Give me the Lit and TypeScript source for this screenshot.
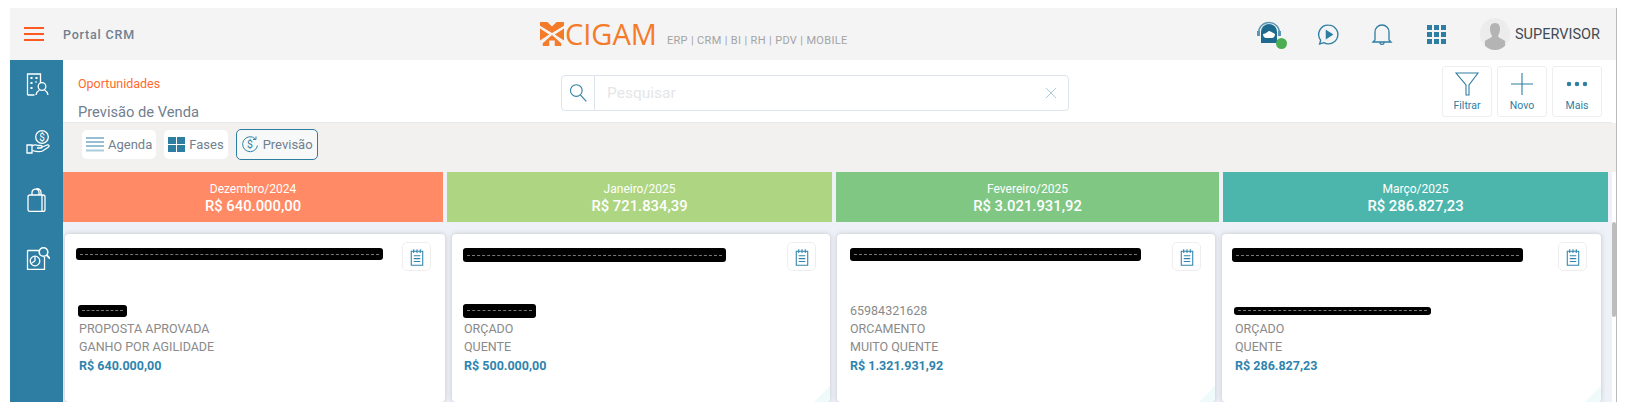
import { LitElement, html, css, svg } from 'lit';
import { customElement } from 'lit/decorators.js';

interface Deal {
  nameWidth: number;
  nameHeight: number;
  nameShift: number;
  contact?: string;
  contactWidth?: number;
  contactHeight?: number;
  contactShift?: number;
  status: string;
  temp: string;
  value: string;
}

interface Month {
  label: string;
  total: string;
  color: string;
  deal: Deal;
}

const MONTHS: Month[] = [
  {
    label: 'Dezembro/2024', total: 'R$ 640.000,00', color: '#ff8a65',
    deal: {
      nameWidth: 307, nameHeight: 12, nameShift: -3, contactWidth: 49, contactHeight: 12, contactShift: -1,
      status: 'PROPOSTA APROVADA', temp: 'GANHO POR AGILIDADE', value: 'R$ 640.000,00'
    }
  },
  {
    label: 'Janeiro/2025', total: 'R$ 721.834,39', color: '#aed581',
    deal: {
      nameWidth: 263, nameHeight: 14, nameShift: -1, contactWidth: 73, contactHeight: 14, contactShift: -1,
      status: 'ORÇADO', temp: 'QUENTE', value: 'R$ 500.000,00'
    }
  },
  {
    label: 'Fevereiro/2025', total: 'R$ 3.021.931,92', color: '#81c784',
    deal: {
      nameWidth: 291, nameHeight: 13, nameShift: 0, contact: '65984321628',
      status: 'ORCAMENTO', temp: 'MUITO QUENTE', value: 'R$ 1.321.931,92'
    }
  },
  {
    label: 'Março/2025', total: 'R$ 286.827,23', color: '#4db6ac',
    deal: {
      nameWidth: 291, nameHeight: 14, nameShift: -3, contactWidth: 197, contactHeight: 8, contactShift: -1,
      status: 'ORÇADO', temp: 'QUENTE', value: 'R$ 286.827,23'
    }
  }
];

const icon = (w: number, h: number, body: unknown, vb = '0 0 24 24') => html`
  <svg width=${w} height=${h} viewBox=${vb} fill="none" stroke="currentColor" stroke-width="1.3">${body}</svg>`;

const SIDE_ICONS = [
  svg`<path d="M1.500 23V2h13v9M1.500 23h7"/><path d="M4.500 6h2M9.500 6h2M4.500 11h2M4.500 16h2M9.500 10h1" stroke-width="2"/><circle cx="16" cy="14.500" r="3.800"/><path d="M10 23c.5-3 2.500-4.500 3.500-5M22 23c-.5-3-2.500-4.500-3.500-5"/>`,
  svg`<circle cx="16" cy="7" r="6.300"/><path d="M1 15h5v8H1zM6 16c2-1.500 4-1.500 6-.5h3c1.500 0 1.500 2.500 0 2.500h-4M15 17.500l6-2.500c2-.5 2.500 1 1.500 2l-6 4c-3 1.500-7 .5-10.500-.5"/><text x="16" y="10.500" font-size="10" fill="currentColor" stroke="none" text-anchor="middle" font-family="Roboto, sans-serif">$</text>`,
  svg`<rect x="2" y="7" width="17" height="16.500" rx="2"/><path d="M16 7v16.500"/><path d="M6 7V4.500c0-4.500 7-4.500 7 0V7M10 1c3-1 5 1 5 3.500V7"/>`,
  svg`<path d="M1.500 4.500h15M1.500 4.500V23.500h17V11"/><circle cx="9" cy="15" r="4.800"/><path d="M9 15v-4.800M9 15l-4 2.500"/><circle cx="17.500" cy="6" r="4.300" fill="#2e7ea3" stroke-width="1.600"/><path d="M20.500 9 24 12.500" stroke-width="1.800"/>`
];

@customElement('app-root')
export class AppRoot extends LitElement {
  static styles = css`
    :host {
      display: block;
      font-family: Roboto, 'Liberation Sans', sans-serif;
      padding: 8px 11px 14px 10px;
      background: #fff;
      overflow: hidden;
    }

    .frame {
      border-right: 1px solid #bbb;
    }

    .top {
      height: 52px;
      background: #f4f4f4;
      display: grid;
      grid-template-columns: 530px 660px 1fr;
      align-items: center;
    }
    .brand-left {
      display: flex;
      align-items: center;
      padding-left: 14px;
      gap: 19px;
      color: #71808f;
      font-size: 12.500px;
      font-weight: 500;
      letter-spacing: 0.8px;
    }
    .burger {
      width: 20px;
      display: flex;
      flex-direction: column;
      gap: 4px;
    }
    .burger i {
      height: 2px;
      background: #ff5a1f;
    }
    .logo {
      display: flex;
      align-items: center;
      color: #f47b2a;
    }
    .logo-word {
      font-family: 'Open Sans', sans-serif;
      font-size: 29px;
      font-weight: 500;
      line-height: 30px;
      margin-left: 1px;
    }
    .logo-tag {
      font-size: 11px;
      color: #a3a3a3;
      margin: 12px 0 0 10px;
      letter-spacing: 0.35px;
    }
    .top-actions {
      display: flex;
      align-items: center;
      color: #2e7ea3;
      padding-left: 56px;
    }
    .agent {
      position: relative;
      display: flex;
      width: 26px;
      height: 26px;
      margin-top: -2px;
    }
    .dot {
      position: absolute;
      width: 11px;
      height: 11px;
      border-radius: 50%;
      background: #4cae50;
      right: -5px;
      bottom: -3px;
    }
    .play { margin-left: 34px; display: flex; }
    .bell { margin-left: 29px; display: flex; }
    .apps {
      margin-left: 33px;
      display: grid;
      grid-template-columns: repeat(3, 5px);
      grid-auto-rows: 5px;
      gap: 2px;
    }
    .apps i { background: #2e7ea3; }
    .user {
      display: flex;
      align-items: center;
      margin-left: 34px;
      gap: 5px;
      color: #3f4a52;
      font-size: 14.500px;
    }
    .avatar {
      width: 30px;
      height: 32px;
      border-radius: 50%;
      overflow: hidden;
      background: #ececec;
      display: flex;
    }

    .body {
      display: grid;
      grid-template-columns: 53px 1fr;
      height: 342px;
    }
    .side {
      background: #2e7ea3;
      color: #fff;
      display: flex;
      flex-direction: column;
      align-items: center;
      padding: 12px 0 0 3px;
      gap: 34px;
    }
    .side svg { display: block; }

    .main {
      display: flex;
      flex-direction: column;
      position: relative;
      overflow: hidden;
      padding-right: 4px;
    }
    .head {
      height: 63px;
      flex: none;
      display: grid;
      grid-template-columns: 500px 510px 1fr;
      border-bottom: 1px solid #e9e9e9;
      box-sizing: border-box;
      padding-left: 15px;
    }
    .crumbs {
      padding-top: 17px;
    }
    .crumb {
      font-size: 12.500px;
      color: #ff6a2b;
      line-height: 14px;
    }
    .title {
      font-size: 14.700px;
      color: #71808f;
      line-height: 18px;
      margin-top: 12px;
    }
    .search {
      align-self: start;
      margin: 15px 0 0 -17px;
      height: 36px;
      width: 508px;
      box-sizing: border-box;
      border: 1px solid #dfe4ec;
      border-radius: 4px;
      display: flex;
      align-items: center;
      color: #2e7ea3;
    }
    .search-ico {
      width: 33px;
      height: 100%;
      box-sizing: border-box;
      border-right: 1px solid #dfe4ec;
      display: flex;
      align-items: center;
      justify-content: center;
    }
    .search-ph {
      flex: 1;
      padding-left: 12px;
      font-size: 15.500px;
      color: #e4e6e9;
    }
    .search-x {
      display: flex;
      margin-right: 11px;
      color: #a9cbdc;
    }
    .tools {
      display: flex;
      justify-content: flex-end;
      gap: 5px;
      padding: 6px 10px 0 0;
    }
    .tool {
      width: 50px;
      height: 51px;
      box-sizing: border-box;
      border: 1px solid #eeeeee;
      border-radius: 3px;
      display: flex;
      flex-direction: column;
      align-items: center;
      color: #2e7ea3;
      font-size: 10.500px;
    }
    .tool svg { height: 26px; margin-top: 4px; margin-bottom: 2px; stroke-width: 1.100; }

    .bar {
      height: 49px;
      flex: none;
      box-sizing: border-box;
      background: #f2f1f0;
      display: flex;
      align-items: center;
      gap: 8px;
      padding: 0 0 7px 19px;
      margin-right: -4px;
    }
    .tab {
      height: 29px;
      box-sizing: border-box;
      background: #fff;
      border-radius: 5px;
      display: flex;
      align-items: center;
      gap: 4px;
      padding: 0 4px;
      color: #71808f;
      font-size: 13px;
    }
    .tab.on {
      height: 31px;
      border: 1px solid #2e7ea3;
      background: #f7f8f8;
    }
    .tab svg { color: #2e7ea3; }

    .board {
      flex: 1;
      background: #eef1f7;
      display: flex;
      flex-direction: column;
    }
    .months, .cards {
      display: grid;
      grid-template-columns: 380px 385px 383px 385px;
      column-gap: 4px;
    }
    .month {
      height: 50px;
      box-sizing: border-box;
      padding-top: 3px;
      display: flex;
      flex-direction: column;
      align-items: center;
      justify-content: center;
      color: #fff;
    }
    .month small {
      font-size: 12px;
      line-height: 15px;
    }
    .month b {
      font-size: 14.800px;
      font-weight: 500;
      line-height: 19px;
    }

    .cards {
      padding-top: 12px;
    }
    .card {
      height: 168px;
      background: #fff;
      border-radius: 4px;
      box-shadow: 0 0 5px rgba(90, 95, 100, 0.3);
      position: relative;
      padding: 14px 13px;
      box-sizing: border-box;
      font-size: 12.500px;
      color: #8a8a8a;
      overflow: hidden;
    }
    .card.c0 { margin: 0 -2px 0 2px; padding-left: 14px; }
    .card.c1 { margin: 0 2px 0 5px; padding-left: 12px; }
    .card.c2 { margin: 0 4px 0 1px; }
    .card.c3 { margin: 0 7px 0 -1px; }
    .redact {
      background: #000;
      border-radius: 3px;
      display: flex;
      align-items: center;
      padding: 0 4px;
      box-sizing: border-box;
    }
    .redact i {
      flex: 1;
      border-top: 1px dashed #777;
    }
    .name {
      height: 12px;
    }
    .contact {
      height: 19px;
      display: flex;
      align-items: center;
      margin-top: 41px;
    }
    .line {
      line-height: 18px;
      height: 18px;
    }
    .value {
      color: #2e84ad;
      font-weight: 700;
      line-height: 18px;
      margin-top: 1px;
    }
    .note {
      position: absolute;
      right: 14px;
      top: 8px;
      width: 29px;
      height: 29px;
      box-sizing: border-box;
      border: 1px solid #eeeeee;
      border-radius: 5px;
      display: flex;
      align-items: center;
      justify-content: center;
      color: #2e84ad;
    }
    .corner {
      position: absolute;
      right: 0;
      bottom: 0;
      width: 0;
      height: 0;
      border-left: 16px solid transparent;
      border-bottom: 16px solid #effbfb;
    }
    .scroll {
      position: absolute;
      right: 0;
      top: 162px;
      width: 4px;
      height: 95px;
      background: #bdbdbd;
      border-radius: 2px;
    }
  `;

  private _card(m: Month, i: number) {
    const d = m.deal;
    return html`
      <div class="card c${i}">
        <div class="name">
          <div class="redact" style="width:${d.nameWidth}px;height:${d.nameHeight}px;margin-left:${d.nameShift}px"><i></i></div>
        </div>
        <div class="contact">
          ${d.contact ?? html`
            <div class="redact" style="width:${d.contactWidth}px;height:${d.contactHeight}px;margin-left:${d.contactShift}px"><i></i></div>
          `}
        </div>
        <div class="line">${d.status}</div>
        <div class="line">${d.temp}</div>
        <div class="value">${d.value}</div>
        <div class="note">
          ${icon(16, 18, svg`<path d="M2 4h14v17H2zM5 1.500V6M9 1.500V6M13 1.500V6M5 9.500h8M5 13h8M5 16.500h8"/>`, '0 0 18 22')}
        </div>
        ${i > 0 ? html`<div class="corner"></div>` : ''}
      </div>
    `;
  }

  render() {
    return html`
      <div class="frame">
        <div class="top">
          <div class="brand-left">
            <div class="burger"><i></i><i></i><i></i></div>
            <span>Portal CRM</span>
          </div>
          <div class="logo">
            <svg width="24" height="26" viewBox="0 0 26 26" fill="#f47b2a">
              <path d="M0 0H8L13 5L18 0H26V4L13 12L0 4Z"/>
              <path d="M0 7 10 13.500 0 20ZM26 7 16 13.500 26 20Z"/>
              <path d="M13 14 23 23V26H16V20H10V26H3V23Z"/>
            </svg>
            <span class="logo-word">CIGAM</span>
            <span class="logo-tag">ERP | CRM | BI | RH | PDV | MOBILE</span>
          </div>
          <div class="top-actions">
            <div class="agent">
              <svg width="26" height="26" viewBox="0 0 26 26">
                <path d="M2.500 13a10.500 10.500 0 0 1 21 0" fill="none" stroke="#5b97b5" stroke-width="1.500"/>
                <path d="M1 11h3v5H1zM22 11h3v5h-3z" fill="#5b97b5"/>
                <path d="M5 12a8 8 0 0 1 16 0v11H5z" fill="#1d6a8e"/>
                <path d="M7 14c3 0 5-3 6-3s4 2 6 3c0 3-2 4-3 4h-6c-1 0-3-1-3-4z" fill="#fff"/>
              </svg>
              <span class="dot"></span>
            </div>
            <span class="play">
              ${icon(25, 25, svg`<path d="M12 3a9 9 0 1 1-4.500 16.800L3.500 21l1-3.500A9 9 0 0 1 12 3z"/><path d="M10 8.500 15.500 12 10 15.500z" fill="currentColor"/>`)}
            </span>
            <span class="bell">
              ${icon(24, 26, svg`<path d="M5 18V10a7 7 0 0 1 14 0v8l2 2H3zM10 20.500c0 2.500 4 2.500 4 0"/>`)}
            </span>
            <div class="apps">${Array.from({ length: 9 }, () => html`<i></i>`)}</div>
            <div class="user">
              <div class="avatar">
                <svg width="30" height="32" viewBox="0 0 30 32">
                  <path d="M15 5c4 0 5 3 5 6 0 3-1 5-2 7 0 2 5 3 7 5v9H5v-9c2-2 7-3 7-5-1-2-2-4-2-7 0-3 1-6 5-6z" fill="#b4b4b4"/>
                </svg>
              </div>
              <span>SUPERVISOR</span>
            </div>
          </div>
        </div>
        <div class="body">
          <div class="side">
            ${SIDE_ICONS.map(b => icon(24, 24, b))}
          </div>
          <div class="main">
            <div class="head">
              <div class="crumbs">
                <div class="crumb">Oportunidades</div>
                <div class="title">Previsão de Venda</div>
              </div>
              <div class="search">
                <div class="search-ico">
                  ${icon(20, 20, svg`<circle cx="10" cy="9" r="7"/><path d="M15 14.500 22 22"/>`)}
                </div>
                <div class="search-ph">Pesquisar</div>
                <span class="search-x">${icon(12, 12, svg`<path d="M2 2l20 20M22 2 2 22" stroke-width="2"/>`)}</span>
              </div>
              <div class="tools">
                <div class="tool">${icon(26, 26, svg`<path d="M2 2h22l-9 12v10h-3V14z"/>`, '0 0 26 26')}Filtrar</div>
                <div class="tool">${icon(26, 26, svg`<path d="M13 2v22M2 13h22"/>`, '0 0 26 26')}Novo</div>
                <div class="tool">${icon(26, 26, svg`<circle cx="5" cy="13" r="1.700" fill="currentColor"/><circle cx="13" cy="13" r="1.700" fill="currentColor"/><circle cx="21" cy="13" r="1.700" fill="currentColor"/>`, '0 0 26 26')}Mais</div>
              </div>
            </div>
            <div class="bar">
              <div class="tab">
                ${icon(18, 16, svg`<path d="M0 2h18M0 6h18M0 10h18" stroke-width="1"/><path d="M0 14.500h18" stroke="#a9cbdc" stroke-width="2"/>`, '0 0 18 16')}
                Agenda
              </div>
              <div class="tab">
                <svg width="17" height="15" viewBox="0 0 17 15" fill="#2e7ea3"><path d="M0 0h8v7H0zM9 0h8v7H9zM0 8h8v7H0zM9 8h8v7H9z"/></svg>
                Fases
              </div>
              <div class="tab on">
                ${icon(18, 18, svg`<path d="M19 5a10 10 0 1 0 3 9M20 2v4h-4"/><text x="12" y="17" font-size="14" fill="currentColor" stroke="none" text-anchor="middle" font-family="Roboto, sans-serif">$</text>`)}
                Previsão
              </div>
            </div>
            <div class="board">
              <div class="months">
                ${MONTHS.map(m => html`
                  <div class="month" style="background:${m.color}">
                    <small>${m.label}</small>
                    <b>${m.total}</b>
                  </div>
                `)}
              </div>
              <div class="cards">
                ${MONTHS.map((m, i) => this._card(m, i))}
              </div>
            </div>
            <div class="scroll"></div>
          </div>
        </div>
      </div>
    `;
  }
}
